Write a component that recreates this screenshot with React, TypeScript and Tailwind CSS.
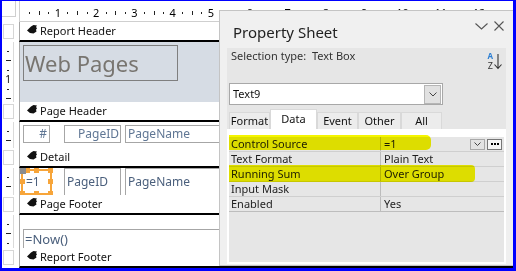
import React from "react";

const F = "font-['Noto_Sans',sans-serif]";
const STEP = 38.3 / 4;

function HRuler() {
  const marks: React.ReactNode[] = [];
  for (let i = 1; i < 52; i++) {
    const x = -0.5 + i * STEP;
    if (i % 4 === 0)
      marks.push(
        <text key={i} x={x} y={16} fontSize={11} textAnchor="middle" fill="#000">
          {i / 4}
        </text>
      );
    else if (i % 2 === 0) marks.push(<rect key={i} x={Math.round(x)} y={10} width={1} height={4} fill="#222" />);
    else marks.push(<rect key={i} x={Math.round(x)} y={11} width={1} height={2} fill="#222" />);
  }
  return (
    <svg width="494" height="20" className={F}>
      {marks}
    </svg>
  );
}

function VRuler({ h }: { h: number }) {
  const marks: React.ReactNode[] = [];
  for (let i = 1; i * STEP - 1 < h; i++) {
    const y = Math.round(-1 + i * STEP);
    if (i % 4 === 0)
      marks.push(
        <text key={i} x={6} y={y + 4} fontSize={10} textAnchor="middle" fill="#000">
          {i / 4}
        </text>
      );
    else if (i % 2 === 0) marks.push(<rect key={i} x={4} y={y} width={5} height={1} fill="#222" />);
    else marks.push(<rect key={i} x={5} y={y} width={2} height={1} fill="#222" />);
  }
  return (
    <svg width="12" height={h} className={`block ${F}`}>
      {marks}
    </svg>
  );
}

function SectionIcon() {
  return (
    <svg width="10" height="9" viewBox="0 0 10 9" className="shrink-0">
      <path d="M0 5.5 L4 1.5 L6.5 0 L10 0.5 L9 2 L10 3.2 L9 4.8 L9.5 6.5 L6.5 8.5 L3 8 Z" fill="#111" />
    </svg>
  );
}

function Bar({ label }: { label: string }) {
  return (
    <div className="flex h-[20px] shrink-0">
      <div className="w-[17px] shrink-0 pt-[2px] pl-[1px]">
        <div className="h-[15px] w-[11px] border border-[#d6d6d6] bg-white" />
      </div>
      <div className="flex flex-1 items-start gap-[3px] border-l border-b-2 border-l-[#a6a6a6] border-b-black bg-white pl-[7px] pt-[3px]">
        <SectionIcon />
        <span className="-mt-[1px] text-[11px] leading-[14px] text-[#111]">{label}</span>
      </div>
    </div>
  );
}

function Body({ h, className, children }: { h: number; className: string; children?: React.ReactNode }) {
  return (
    <div className="flex shrink-0 overflow-hidden" style={{ height: h }}>
      <div className="w-[17px] shrink-0 bg-white">
        <div className="w-[12px] border-r border-[#dadada]">
          <VRuler h={h} />
        </div>
      </div>
      <div className={`relative flex-1 overflow-hidden border-l border-[#a6a6a6] ${className}`}>{children}</div>
    </div>
  );
}

function Handle({ className }: { className: string }) {
  return <div className={`absolute h-[5px] w-[5px] bg-[#f7a53a] ${className}`} />;
}

const rows = [
  { k: "Control Source", v: "=1" },
  { k: "Text Format", v: "Plain Text" },
  { k: "Running Sum", v: "Over Group" },
  { k: "Input Mask", v: "" },
  { k: "Enabled", v: "Yes" },
];

const tabs = [
  { t: "Format", w: "w-[41px]" },
  { t: "Data", w: "w-[47px]", on: true },
  { t: "Event", w: "w-[41px]" },
  { t: "Other", w: "w-[43px]" },
  { t: "All", w: "w-[41px]" },
];

function PropertySheet() {
  return (
    <div className="absolute left-[217px] top-[9px] flex h-[256px] w-[294px] flex-col border border-r-0 border-[#c4c4c4] bg-[#f0f0f0]">
      <div className="relative h-[37px] shrink-0">
        <span className="absolute left-[13px] top-[11px] text-[15px] leading-[20px] text-[#222]">Property Sheet</span>
        <svg className="absolute left-[255px] top-[12px]" width="13" height="7" viewBox="0 0 13 7">
          <path d="M0.5 0.5 L6.5 6 L12.5 0.5" fill="none" stroke="#555" strokeWidth="1.1" />
        </svg>
        <svg className="absolute left-[274px] top-[10px]" width="10" height="10" viewBox="0 0 10 10">
          <path d="M0.5 0.5 L9.5 9.5 M9.5 0.5 L0.5 9.5" fill="none" stroke="#555" strokeWidth="1.1" />
        </svg>
      </div>

      <div className="mx-[7px] flex flex-1 flex-col bg-[#e6e6e6]">
        <div className="flex h-[35px] shrink-0 justify-between pl-[4px] pr-[4px]">
          <span className="mt-[1px] text-[11px] leading-[14px] text-[#333]">Selection type:&nbsp;&nbsp;Text Box</span>
          <div className="mt-[4px] flex items-start">
            <div className="flex flex-col items-center gap-[1px]">
              <span className="text-[8px] font-bold leading-[8px] text-[#2d7fd3]">A</span>
              <span className="text-[9px] leading-[9px] text-[#333]">Z</span>
            </div>
            <svg width="8" height="16" viewBox="0 0 8 16" className="ml-[1px] mt-[2px]">
              <path d="M4 0 V14 M0.5 10.5 L4 14.5 L7.5 10.5" fill="none" stroke="#333" strokeWidth="1.1" />
            </svg>
          </div>
        </div>

        <div className="ml-[2px] flex h-[22px] w-[214px] shrink-0 items-center justify-between border border-[#a8a8a8] bg-white pl-[3px] pr-[1px]">
          <span className="text-[11px] leading-[14px] text-[#111]">Text9</span>
          <div className="flex h-[19px] w-[17px] items-center justify-center border border-[#b5b5b5] bg-[#e1e1e1]">
            <svg width="8" height="5" viewBox="0 0 8 5">
              <path d="M0.5 0.5 L4 4 L7.5 0.5" fill="none" stroke="#444" strokeWidth="1" />
            </svg>
          </div>
        </div>

        <div className="ml-[2px] mt-[4px] flex h-[20px] shrink-0 items-end">
          {tabs.map((t) => (
            <div
              key={t.t}
              className={`flex items-center justify-center border border-b-0 border-[#d9d9d9] text-[11px] leading-[14px] text-[#111] ${t.w} ${
                t.on ? "h-[20px] bg-white pb-[2px]" : "h-[17px] bg-[#ececec]"
              }`}
            >
              {t.t}
            </div>
          ))}
        </div>

        <div className="relative flex flex-1 flex-col bg-white px-[2px] pb-[2px] pt-[8px]">
          <div className="flex flex-1 flex-col bg-[#e6e6e6]">
            {rows.map((r, i) => (
              <div
                key={r.k}
                className={`flex h-[15px] shrink-0 border-b ${i === rows.length - 1 ? "border-b-[#bdbdbd]" : "border-b-[#cfcfcf]"}`}
              >
                <div className="w-[152px] shrink-0 border-r border-[#bcbcbc] pl-[2px] text-[11px] leading-[14px] text-[#1e1e1e]">
                  {r.k}
                </div>
                <div className="flex flex-1 items-center justify-between pl-[3px] pr-[2px] text-[11px] leading-[14px] text-[#1e1e1e]">
                  <span>{r.v}</span>
                  {i === 0 && (
                    <div className="flex gap-[2px]">
                      <div className="flex h-[11px] w-[15px] items-center justify-center border border-[#a9a9a9] bg-[#e3e3e3]">
                        <svg width="7" height="4" viewBox="0 0 7 4">
                          <path d="M0.5 0.5 L3.5 3.5 L6.5 0.5" fill="none" stroke="#444" strokeWidth="1" />
                        </svg>
                      </div>
                      <div className="flex h-[11px] w-[15px] items-center justify-center gap-[1px] border border-[#777] bg-[#f6f6f6]">
                        <span className="h-[2px] w-[2px] bg-black" />
                        <span className="h-[2px] w-[2px] bg-black" />
                        <span className="h-[2px] w-[2px] bg-black" />
                      </div>
                    </div>
                  )}
                </div>
              </div>
            ))}
          </div>
          <div className="absolute left-[2px] top-[6px] h-[15px] w-[202px] rounded-r-[5px] bg-[#f5f500] mix-blend-multiply" />
          <div className="absolute left-[2px] top-[36px] h-[17px] w-[246px] rounded-r-[4px] bg-[#f5f500] mix-blend-multiply" />
        </div>
      </div>
      <div className="h-[1px] shrink-0" />
    </div>
  );
}

export default function App() {
  return (
    <div
      className={`relative h-[271px] w-[516px] overflow-hidden border-b-[3px] border-l-2 border-r-[3px] border-t border-[#0000ff] bg-white ${F}`}
    >
      <div className="flex h-[21px] shrink-0">
        <div className="w-[17px] shrink-0">
          <div className="h-[16px] w-[14px] border-b border-r border-[#cfcfcf]" />
        </div>
        <div className="flex-1 border-b border-l border-[#cfcfcf]">
          <HRuler />
        </div>
      </div>

      <Bar label="Report Header" />
      <Body h={60} className="bg-[#d6dce4]">
        <div className="ml-[3px] mt-[3px] flex h-[36px] w-[155px] items-center border border-[#7f7f7f] pl-[1px]">
          <span className="text-[22px] leading-[28px] text-[#787570]">Web Pages</span>
        </div>
      </Body>

      <Bar label="Page Header" />
      <Body h={26} className="bg-white">
        <div className="ml-[3px] mt-[3px] flex gap-[4px] text-[12px] leading-[16px] text-[#5f7694]">
          <div className="flex h-[18px] w-[27px] items-center justify-end border border-[#a6a6a6] pr-[2px]">#</div>
          <div className="ml-[10px] flex h-[18px] w-[57px] items-center justify-end border border-[#a6a6a6] pr-[1px]">PageID</div>
          <div className="flex h-[18px] w-[220px] items-center border border-[#a6a6a6] pl-[2px]">PageName</div>
        </div>
      </Body>

      <Bar label="Detail" />
      <Body h={27} className="bg-white">
        <div className="flex text-[12px] leading-[16px] text-[#4a5f7c]">
          <div className="relative h-[28px] w-[33px] shrink-0">
            <div className="absolute inset-[1px] flex items-center border-2 border-[#f7a53a] pl-[3px]">=1</div>
            <Handle className="left-[5px] top-0" />
            <Handle className="right-0 top-0" />
            <Handle className="bottom-0 left-0" />
            <Handle className="bottom-0 right-0" />
            <Handle className="left-[14px] top-0" />
            <Handle className="bottom-0 left-[14px]" />
            <Handle className="left-0 top-[11px]" />
            <Handle className="right-0 top-[11px]" />
            <div className="absolute left-0 top-0 h-[6px] w-[6px] bg-[#8c8c8c]" />
          </div>
          <div className="ml-[11px] flex h-[28px] w-[57px] items-center border border-[#a6a6a6] pl-[2px]">PageID</div>
          <div className="ml-[4px] flex h-[28px] w-[220px] items-center border border-[#a6a6a6] pl-[2px]">PageName</div>
        </div>
      </Body>

      <Bar label="Page Footer" />
      <Body h={33} className="bg-white">
        <div className="ml-[3px] mt-[14px] flex h-[19px] w-[300px] items-center border border-b-0 border-[#a6a6a6] pl-[1px] text-[13px] leading-[18px] text-[#4a5f7c]">
          =Now()
        </div>
      </Body>

      <Bar label="Report Footer" />

      <PropertySheet />
    </div>
  );
}
